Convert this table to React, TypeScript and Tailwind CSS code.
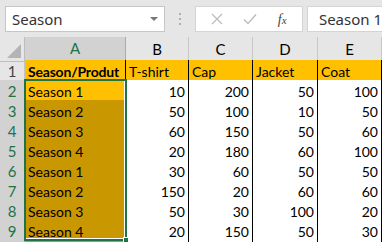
import React from "react";

const cols = ["A", "B", "C", "D", "E"];
const heads = ["Season/Produt", "T-shirt", "Cap", "Jacket", "Coat"];
const rows: [string, number, number, number, number][] = [
  ["Season 1", 10, 200, 50, 100],
  ["Season 2", 50, 100, 10, 50],
  ["Season 3", 60, 150, 50, 60],
  ["Season 4", 20, 180, 60, 100],
  ["Season 1", 30, 60, 50, 50],
  ["Season 2", 150, 20, 60, 60],
  ["Season 3", 50, 30, 100, 20],
  ["Season 4", 20, 150, 50, 30],
];

const grid = "grid grid-cols-[25px_101px_63px_64px_65px_64px]";

export default function App() {
  return (
    <div className="w-[382px] h-[242px] overflow-hidden bg-[#e6e6e6] text-black" style={{ fontFamily: "Lato, 'Liberation Sans', sans-serif" }}>
      {/* formula bar */}
      <div className="h-[37px] flex items-start pt-[6px] pl-[5px]" style={{ fontFamily: "'Noto Sans', 'Open Sans', sans-serif" }}>
        <div className="w-[163px] h-[26px] bg-white border border-[#c6c6c6] flex items-center pl-[6px] pr-[6px] text-[15px] text-[#333]">
          <span className="flex-1">Season</span>
          <span className="w-0 h-0 border-l-[4px] border-r-[4px] border-t-[4px] border-l-transparent border-r-transparent border-t-[#777]" />
        </div>
        <div className="w-[30px] h-[26px] flex flex-col items-center justify-center gap-[3px]">
          <span className="w-[2px] h-[2px] bg-[#b0b0b0]" />
          <span className="w-[2px] h-[2px] bg-[#b0b0b0]" />
          <span className="w-[2px] h-[2px] bg-[#b0b0b0]" />
        </div>
        <div className="w-[110px] h-[26px] bg-white border border-[#d4d4d4] flex items-center">
          <svg width="12" height="12" viewBox="0 0 12 12" className="ml-[15px]">
            <path d="M1 1L11 11M11 1L1 11" stroke="#bdbdbd" strokeWidth="1.3" />
          </svg>
          <svg width="14" height="12" viewBox="0 0 14 12" className="ml-[20px]">
            <path d="M1 6.5L5 10.5L13 1.5" stroke="#bdbdbd" strokeWidth="1.4" fill="none" />
          </svg>
          <span className="ml-[21px] italic text-[14px] text-[#444]" style={{ fontFamily: "'Liberation Serif', serif" }}>
            f<span className="text-[11px]">x</span>
          </span>
        </div>
        <div className="ml-[4px] flex-1 h-[26px] bg-white border border-[#d4d4d4] border-r-0 flex items-center pl-[11px] text-[15px] text-[#333] whitespace-nowrap">
          Season 1
        </div>
      </div>

      {/* sheet */}
      <div className="relative">
        <div className={`${grid} h-[23px] text-[15px]`}>
          <div className="relative border-r border-b border-[#bdbdbd]">
            <svg width="14" height="14" viewBox="0 0 14 14" className="absolute right-[3px] bottom-[3px]">
              <path d="M14 0L14 14L0 14Z" fill="#b4b4b4" />
            </svg>
          </div>
          {cols.map((c, i) => (
            <div
              key={c}
              className={
                i === 0
                  ? "bg-[#d2d2d2] text-[#217346] border-b-2 border-b-[#217346] border-r border-r-[#a9a9a9] flex items-center justify-center"
                  : "border-r border-b border-[#c8c8c8] flex items-center justify-center"
              }
            >
              {c}
            </div>
          ))}
        </div>

        <div className={`${grid} h-[20px] text-[14px]`}>
          <div className="bg-[#e6e6e6] border-r border-b border-[#c4c4c4] flex items-center justify-center text-[15px] text-[#444]">1</div>
          {heads.map((h, i) => (
            <div
              key={h}
              className={`bg-[#ffc000] border-r border-b border-black flex items-center pl-[3px] whitespace-nowrap overflow-hidden ${i === 0 ? "font-bold tracking-[-0.2px]" : ""}`}
            >
              {h}
            </div>
          ))}
        </div>

        {rows.map((r, ri) => (
          <div key={ri} className={`${grid} h-[20px] text-[14px]`}>
            <div className="bg-[#d2d2d2] border-r border-b border-[#b4b4b4] flex items-center justify-center text-[15px] text-[#217346]">
              {ri + 2}
            </div>
            <div className={`${ri === 0 ? "bg-[#ffc000]" : "bg-[#c99700]"} border-r border-b border-black flex items-center pl-[3px]`}>
              {r[0]}
            </div>
            {r.slice(1).map((v, vi) => (
              <div key={vi} className="bg-white border-r border-b border-black flex items-center justify-end pr-[3px]">
                {v}
              </div>
            ))}
          </div>
        ))}

        {/* selection A2:A9 */}
        <div className="absolute left-[24px] top-[42px] w-[103px] h-[162px] border-2 border-[#217346] pointer-events-none">
          <div className="absolute inset-0 border-r border-b border-white" />
          <span className="absolute -right-[4px] -bottom-[4px] w-[6px] h-[6px] bg-[#217346] border border-white" />
        </div>
      </div>
    </div>
  );
}
